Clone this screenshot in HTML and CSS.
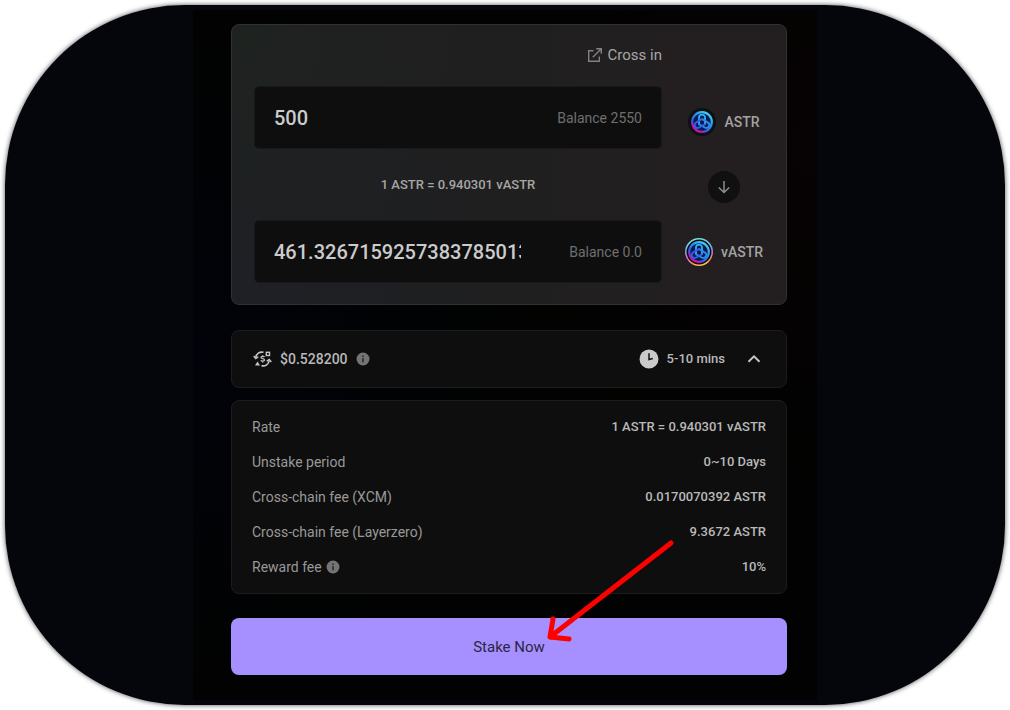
FILE: index.html
```html
<!DOCTYPE html>
<html lang="en">
<head>
<meta charset="utf-8">
<meta name="viewport" content="width=device-width, initial-scale=1">
<title>Stake ASTR</title>
<link rel="stylesheet" href="styles.css">
</head>
<body>
<svg class="defs" width="0" height="0" aria-hidden="true">
  <defs>
    <linearGradient id="astr" gradientUnits="userSpaceOnUse" x1="3" y1="20" x2="16" y2="3">
      <stop offset="0" stop-color="#e6109a"/>
      <stop offset="0.18" stop-color="#b01cc0"/>
      <stop offset="0.36" stop-color="#2a63ee"/>
      <stop offset="0.7" stop-color="#2595f2"/>
      <stop offset="1" stop-color="#3cc8fa"/>
    </linearGradient>
    <linearGradient id="ring" x1="0.4" y1="0" x2="0.6" y2="1">
      <stop offset="0" stop-color="#6fe6cf"/>
      <stop offset="0.35" stop-color="#7aa7e8"/>
      <stop offset="0.65" stop-color="#cf6fd0"/>
      <stop offset="0.85" stop-color="#f58a5c"/>
      <stop offset="1" stop-color="#ffc23c"/>
    </linearGradient>
    <symbol id="astr-mark" viewBox="0 0 22 22">
      <circle cx="11" cy="11" r="9.800" fill="#0b1a4a" stroke="url(#astr)" stroke-width="2.200"/>
      <g fill="none" stroke-width="1.800" stroke-linecap="round">
        <path stroke="#36aef5" d="M8 13V6.600a3 3 0 0 1 6 0V13"/>
        <path stroke="#2b8cf0" d="M8 13V6.600a3 3 0 0 1 6 0V13" transform="rotate(120 11 11.500)"/>
        <path stroke="#2f62ea" d="M8 13V6.600a3 3 0 0 1 6 0V13" transform="rotate(240 11 11.500)"/>
      </g>
    </symbol>
    <symbol id="info" viewBox="0 0 14 14">
      <circle cx="7" cy="7" r="6.500" fill="#747474"/>
      <path d="M7 6.300v4M7 3.500v1.400" stroke="#242424" stroke-width="1.500"/>
    </symbol>
  </defs>
</svg>
<div class="stage">
  <main class="band">
    <form class="column">
      <section class="swap">
        <a class="cross" href="#cross-in">
          <svg width="16" height="16" viewBox="0 0 16 16" fill="none" stroke="#818181" stroke-width="1.400" aria-hidden="true"><path d="M6.500 3.700H1.700v10.600h10.600V9.500M5.800 10.200 14 2M9.200 1.700h5.100v5.100"/></svg>
          Cross in
        </a>
        <div class="field from">
          <input class="amount" id="amount" type="text" value="500" aria-label="Amount in ASTR">
          <label class="balance" for="amount">Balance 2550</label>
        </div>
        <div class="token from">
          <svg width="28" height="28" viewBox="0 0 28 28" aria-hidden="true"><circle cx="14" cy="14" r="14" fill="#101011"/><use href="#astr-mark" x="3" y="3" width="22" height="22"/></svg>
          ASTR
        </div>
        <p class="rate">1 ASTR = 0.940301 vASTR</p>
        <button class="switch" type="button" aria-label="Switch direction">
          <svg width="14" height="14" viewBox="0 0 14 14" fill="none" stroke="#8c8c8c" stroke-width="1.500" aria-hidden="true"><path d="M7 1v11.500M1.800 7.500 7 12.500l5.200-5"/></svg>
        </button>
        <div class="field to">
          <input class="amount" id="result" type="text" value="461.3267159257383785013" readonly aria-label="Amount in vASTR">
          <label class="balance" for="result">Balance 0.0</label>
        </div>
        <div class="token to">
          <svg width="28" height="28" viewBox="0 0 28 28" aria-hidden="true"><circle cx="14" cy="14" r="13.200" fill="#08080b" stroke="url(#ring)" stroke-width="1.600"/><use href="#astr-mark" x="3" y="3" width="22" height="22"/></svg>
          vASTR
        </div>
      </section>

      <section class="panel summary">
        <svg class="fee-icon" width="19" height="16" viewBox="0 0 19 16" fill="none" stroke="#c4c4c4" stroke-width="1.600" aria-hidden="true">
          <path d="M10.500 1.300C6.500.4 3.300 2.800 2.700 6.600M8.500 14.700c4 .9 7.100-1.500 7.800-5.300"/>
          <path d="m.7 5 2 2.600L5.300 5.800M18.300 11l-2-2.600-2.600 1.800" stroke-width="1.400"/>
          <path d="M11.500 6c-.5-.9-3.500-1.100-3.500.4 0 1.600 3.500.9 3.500 2.600 0 1.500-3 1.500-3.700.4M9.700 4.300v1M9.700 10.300v1.200" stroke-width="1.300"/>
          <rect x="13.300" y="1.300" width="3.200" height="3.200" stroke-width="1.400"/>
          <path d="M4.500 10.500 7 14.500H2Z" fill="#c4c4c4" stroke="none"/>
        </svg>
        <span>$0.528200</span>
        <svg width="14" height="14" aria-hidden="true"><use href="#info"/></svg>
        <svg class="clock" width="20" height="20" viewBox="0 0 20 20" aria-hidden="true"><circle cx="10" cy="10" r="9.500" fill="#cacaca"/><path d="M10 4.200v6.400l3.800-1" fill="none" stroke="#161616" stroke-width="1.500"/></svg>
        <span class="time">5-10 mins</span>
        <button class="toggle" type="button" aria-label="Hide details">
          <svg width="14" height="10" viewBox="0 0 14 10" fill="none" stroke="#c6c6c6" stroke-width="2" aria-hidden="true"><path d="m1.500 7.800 5.500-5.500 5.500 5.500"/></svg>
        </button>
      </section>

      <dl class="panel details">
        <div class="row"><dt>Rate</dt><dd>1 ASTR = 0.940301 vASTR</dd></div>
        <div class="row"><dt>Unstake period</dt><dd>0~10 Days</dd></div>
        <div class="row"><dt>Cross-chain fee (XCM)</dt><dd>0.0170070392 ASTR</dd></div>
        <div class="row"><dt>Cross-chain fee (Layerzero)</dt><dd>9.3672 ASTR</dd></div>
        <div class="row"><dt>Reward fee <svg width="14" height="14" aria-hidden="true"><use href="#info"/></svg></dt><dd>10%</dd></div>
      </dl>

      <div class="action">
        <button class="stake" type="submit">Stake Now</button>
        <svg class="pointer" width="132" height="107" viewBox="0 0 132 107" fill="none" stroke="#ff0000" stroke-width="5" stroke-linecap="round" stroke-linejoin="round" aria-hidden="true"><path d="M126 5 5 99M8 81 5 99l19 2"/></svg>
      </div>
    </form>
  </main>
</div>
</body>
</html>
```

FILE: styles.css
```css
* {
  box-sizing: border-box;
}

body {
  margin: 0;
  padding: 5px;
  background: #fff;
  color: #b9b9b9;
  font: 500 14px/20px Roboto, "Open Sans", sans-serif;
}

input,
button {
  font: inherit;
  color: inherit;
  border: 0;
  background: none;
  padding: 0;
}

svg {
  display: block;
  flex: none;
}

.defs {
  position: absolute;
}

.stage {
  min-height: calc(100vh - 10px);
  padding: 5px 0;
  border-radius: 180px;
  background: #04060b;
  box-shadow: 0 0 5px rgba(0, 0, 0, 0.7);
}

.band {
  max-width: 624px;
  margin: 0 auto;
  padding: 14px 30px 25px 38px;
  background:
    radial-gradient(circle at 100% 20%, #070203, transparent 45%),
    radial-gradient(circle at 0 50%, #02030a, transparent 45%),
    #010201;
}

.column {
  display: flex;
  flex-direction: column;
}

.swap {
  display: grid;
  grid-template-columns: 1fr 124px;
  grid-template-rows: 61px 63px 71px 63px;
  align-items: center;
  padding: 0 0 21px 22px;
  border: 1px solid #303031;
  border-radius: 8px;
  background:
    radial-gradient(circle at 0 0, #1f2320, transparent 40%),
    radial-gradient(circle at 0 100%, #1e2026, transparent 50%),
    linear-gradient(90deg, #1f1f1f 45%, #231f20 80%);
}

.cross {
  display: flex;
  align-items: center;
  justify-self: end;
  gap: 5px;
  grid-column: 1;
  padding-bottom: 2px;
  font-size: 15px;
  font-weight: 400;
  color: #a8a8a8;
  text-decoration: none;
}

.field {
  grid-column: 1;
  align-self: stretch;
  display: flex;
  align-items: center;
  justify-content: space-between;
  padding: 0 19px;
  border: 1px solid #191919;
  border-radius: 5px;
  background: #0e0e0e;
}

.amount {
  width: 247px;
  height: 30px;
  font-size: 20px;
  color: #cbcbcb;
  outline: 0;
}

.balance {
  font-weight: 400;
  color: #6f6f6f;
}

.token {
  display: flex;
  align-items: center;
  justify-content: center;
  gap: 8px;
  font-size: 14px;
  color: #a3a3a3;
}

.token.from {
  padding-top: 8px;
}

.rate {
  margin: 0;
  text-align: center;
  font-size: 13px;
  color: #a6a6a6;
}

.switch {
  display: grid;
  place-items: center;
  justify-self: center;
  width: 32px;
  height: 32px;
  margin-top: 4px;
  border-radius: 50%;
  background: #101010;
}

.panel {
  border: 1px solid #1c1c1d;
  border-radius: 8px;
  background: #0e0e0e;
}

.summary {
  display: flex;
  align-items: center;
  gap: 8px;
  min-height: 58px;
  margin-top: 25px;
  padding: 0 25px 0 21px;
}

.clock {
  margin-left: auto;
}

.time {
  font-size: 13px;
}

.toggle {
  margin-left: 14px;
}

.details {
  margin: 12px 0 0;
  padding: 8px 20px 9px;
}

.row {
  display: flex;
  align-items: center;
  justify-content: space-between;
  height: 35px;
}

dt {
  display: flex;
  align-items: center;
  gap: 4px;
  color: #999;
  font-weight: 400;
}

dd {
  margin: 0;
  font-size: 13px;
}

.action {
  position: relative;
  margin-top: 24px;
}

.stake {
  display: block;
  width: 100%;
  height: 57px;
  border-radius: 8px;
  background: #a690ff;
  color: #2b2545;
  font-size: 15px;
  font-weight: 400;
}

.pointer {
  position: absolute;
  left: calc(50% + 36px);
  bottom: 30px;
  pointer-events: none;
}
```
